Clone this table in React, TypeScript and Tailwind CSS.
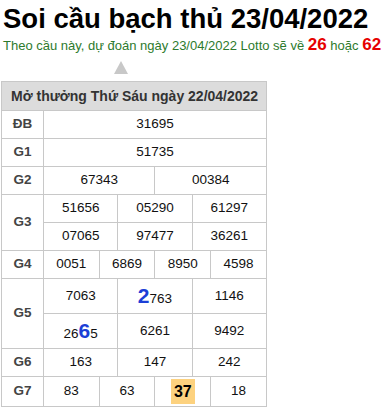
import React from "react";

const F = { fontFamily: '"Liberation Sans", Arial, sans-serif' };

export default function App() {
  const td = "border border-[#c8c8c8] text-center text-[13.5px] text-[#111] p-0";
  const lab = "border border-[#c8c8c8] text-center text-[13.5px] font-bold text-[#444] p-0";
  return (
    <div className="bg-white w-[392px] h-[413px] overflow-hidden" style={F}>
      <h1 className="text-[27.5px] leading-[32px] font-bold text-black pl-[3px] pt-[3px]">
        Soi cầu bạch thủ 23/04/2022
      </h1>
      <div className="text-[13px] leading-[20px] text-[#2d7a2d] pl-[3px] whitespace-nowrap">
        Theo cầu này, dự đoán ngày 23/04/2022 Lotto sẽ về{" "}
        <span className="text-[17px] font-bold text-[#e60000]">26</span> hoặc{" "}
        <span className="text-[17px] font-bold text-[#e60000]">62</span>
      </div>
      <div className="flex pl-[114px] pt-[5px]">
        <div className="w-0 h-0 border-l-[7px] border-r-[7px] border-b-[13px] border-l-transparent border-r-transparent border-b-[#c8c8c8]" />
      </div>
      <table className="table-fixed border-collapse ml-[1px] mt-[7px] w-[266px]">
        <colgroup>
          <col className="w-[42px]" />
          {Array.from({ length: 12 }).map((_, i) => (
            <col key={i} />
          ))}
        </colgroup>
        <tbody>
          <tr className="h-[29px] bg-[#dcdcdc]">
            <td colSpan={13} className="border border-[#c8c8c8] text-left pl-[9px] text-[14px] font-bold text-[#333]">
              Mở thưởng Thứ Sáu ngày 22/04/2022
            </td>
          </tr>
          <tr className="h-[28px]">
            <td className={lab}>ĐB</td>
            <td colSpan={12} className={td}>31695</td>
          </tr>
          <tr className="h-[28px]">
            <td className={lab}>G1</td>
            <td colSpan={12} className={td}>51735</td>
          </tr>
          <tr className="h-[28px]">
            <td className={lab}>G2</td>
            <td colSpan={6} className={td}>67343</td>
            <td colSpan={6} className={td}>00384</td>
          </tr>
          <tr className="h-[28px]">
            <td rowSpan={2} className={lab}>G3</td>
            <td colSpan={4} className={td}>51656</td>
            <td colSpan={4} className={td}>05290</td>
            <td colSpan={4} className={td}>61297</td>
          </tr>
          <tr className="h-[28px]">
            <td colSpan={4} className={td}>07065</td>
            <td colSpan={4} className={td}>97477</td>
            <td colSpan={4} className={td}>36261</td>
          </tr>
          <tr className="h-[28px]">
            <td className={lab}>G4</td>
            <td colSpan={3} className={td}>0051</td>
            <td colSpan={3} className={td}>6869</td>
            <td colSpan={3} className={td}>8950</td>
            <td colSpan={3} className={td}>4598</td>
          </tr>
          <tr className="h-[35px]">
            <td rowSpan={2} className={lab}>G5</td>
            <td colSpan={4} className={td}>7063</td>
            <td colSpan={4} className={td}>
              <span className="text-[21px] font-bold text-[#1c3fd6]">2</span>763
            </td>
            <td colSpan={4} className={td}>1146</td>
          </tr>
          <tr className="h-[35px]">
            <td colSpan={4} className={td}>
              26<span className="text-[21px] font-bold text-[#1c3fd6]">6</span>5
            </td>
            <td colSpan={4} className={td}>6261</td>
            <td colSpan={4} className={td}>9492</td>
          </tr>
          <tr className="h-[28px]">
            <td className={lab}>G6</td>
            <td colSpan={4} className={td}>163</td>
            <td colSpan={4} className={td}>147</td>
            <td colSpan={4} className={td}>242</td>
          </tr>
          <tr className="h-[30px]">
            <td className={lab}>G7</td>
            <td colSpan={3} className={td}>83</td>
            <td colSpan={3} className={td}>63</td>
            <td colSpan={3} className={td}>
              <span className="inline-block bg-[#fdd27f] font-bold text-[16px] text-black px-[3px] leading-[25px]">37</span>
            </td>
            <td colSpan={3} className={td}>18</td>
          </tr>
        </tbody>
      </table>
    </div>
  );
}
